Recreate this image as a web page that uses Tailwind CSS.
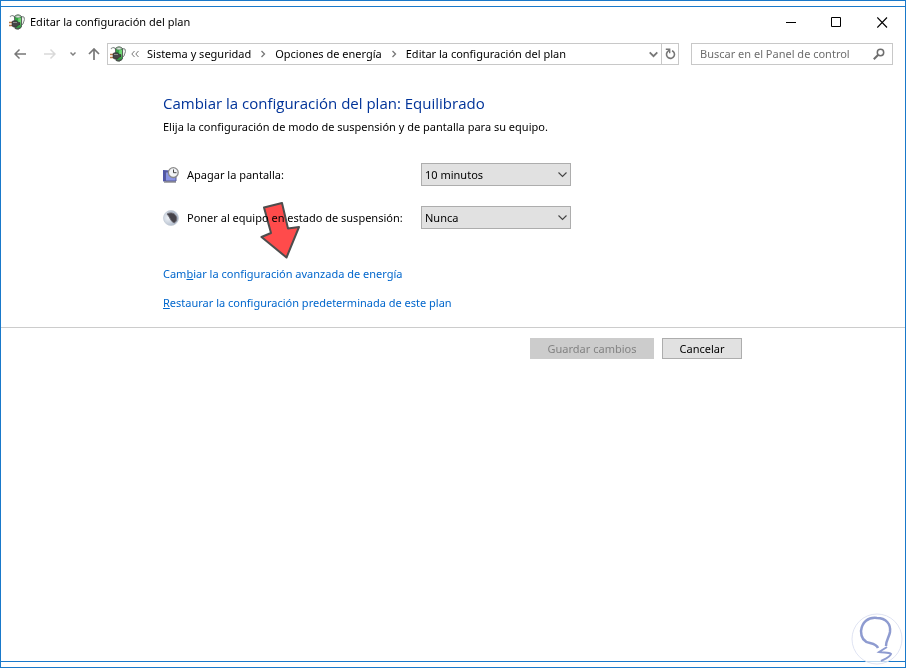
<!DOCTYPE html>
<html lang="es">
<head>
    <meta charset="UTF-8">
    <meta name="viewport" content="width=device-width, initial-scale=1.0">
    <title>Editar la configuración del plan</title>
    <script src="https://cdn.jsdelivr.net/npm/@tailwindcss/browser@4"></script>
</head>
<body class="bg-white text-black text-[11px] leading-4 font-['Noto_Sans','Open_Sans',sans-serif]">
    <!-- shared battery/plug icon -->
    <svg class="hidden">
        <symbol id="power" viewBox="0 0 16 16">
            <path d="M1 3C2.500 .8 5 1 6 4" fill="none" stroke="#8b9290" stroke-width="1.200"/>
            <path d="M12 2.500l3 .5.500 2.500-1.500 4.500-2 1.500" fill="#eef2ef" stroke="#7d8581" stroke-width="1"/>
            <path d="M5.500 2.500Q9-.8 12.500 2.500L12.500 13q-2.500 3.500-6.500 1.500z" fill="#35a345" stroke="#59635c" stroke-width="1"/>
            <path d="M6 2.500Q9 .3 12 2.500 9 5 6 2.500z" fill="#dfe8e0" stroke="#8b958e" stroke-width=".5"/>
            <path d="M9 4.500l3-.8v7l-2 1z" fill="#6fd672"/>
            <path d="M6 13.300q3 1.500 6-.5v1q-2.500 2.500-6 1z" fill="#4c544e"/>
            <path d="M0 8.500h3.500M0 11.500h3.500" stroke="#b87a4a" stroke-width="1.500"/>
            <path d="M3 7.500l1.500-.8h3l2 1.800h1.500v2.500H9.500l-2 2h-3L3 12z" fill="#454545" stroke="#2b2b2b" stroke-width=".5"/>
            <path d="M4 8.500h4" stroke="#8c8c8c"/>
        </symbol>
    </svg>

    <div class="min-h-screen flex flex-col border border-[#1979ca]">
        <div class="h-1.5 border-b border-[#1979ca]"></div>

        <!-- Title bar -->
        <header class="flex items-center h-[30px] pl-2">
            <svg class="size-4"><use href="#power"/></svg>
            <span class="ml-[5px]">Editar la configuración del plan</span>
            <div class="ml-auto flex">
                <button class="w-[46px] h-7 grid place-items-center" aria-label="Minimizar">
                    <svg class="size-[11px]" viewBox="0 0 11 11"><path d="M0 5.500h10" stroke="#000"/></svg>
                </button>
                <button class="w-[45px] h-7 grid place-items-center" aria-label="Maximizar">
                    <svg class="size-[11px]" viewBox="0 0 11 11"><path d="M.5.5h9v9h-9z" fill="none" stroke="#000"/></svg>
                </button>
                <button class="w-[46px] h-7 grid place-items-center" aria-label="Cerrar">
                    <svg class="size-[11px]" viewBox="0 0 11 11"><path d="M.3.500l9.700 10M10 .5L.3 10.500" stroke="#000" stroke-width="1.100"/></svg>
                </button>
            </div>
        </header>

        <!-- Navigation bar -->
        <nav class="flex items-center pt-1.5 pl-[13px] pr-3">
            <button aria-label="Atrás">
                <svg class="w-3 h-3" viewBox="0 0 12 12" fill="none" stroke="#777" stroke-width="1.500"><path d="M12 6H1M5.500 1.500L1 6l4.500 4.500"/></svg>
            </button>
            <button class="ml-[18px]" aria-label="Adelante">
                <svg class="w-3 h-3" viewBox="0 0 12 12" fill="none" stroke="#d9d9d9" stroke-width="1.500"><path d="M0 6h11M6.500 1.500L11 6l-4.500 4.500"/></svg>
            </button>
            <button class="ml-3.5" aria-label="Ubicaciones recientes">
                <svg class="w-1.5 h-1.5" viewBox="0 0 6 6" fill="none" stroke="#808080" stroke-width="1.500"><path d="M.5 1.500L3 4l2.500-2.500"/></svg>
            </button>
            <button class="ml-3" aria-label="Subir">
                <svg class="w-3 h-3" viewBox="0 0 12 12" fill="none" stroke="#777" stroke-width="1.700"><path d="M6 12V1M1 6l5-5 5 5"/></svg>
            </button>

            <div class="ml-[7px] flex-1 flex items-center h-[22px] border border-[#c8c8c8]">
                <svg class="ml-0.5 size-4"><use href="#power"/></svg>
                <svg class="ml-[5px] mr-px w-2 h-2" viewBox="0 0 8 8" fill="none" stroke="#777"><path d="M3.500 1L.8 4l2.700 3M7.500 1L4.800 4l2.700 3"/></svg>
                <a href="#" class="ml-[7px]">Sistema y seguridad</a>
                <svg class="mx-[9px] w-1.5 h-2" viewBox="0 0 6 8" fill="none" stroke="#777" stroke-width="1.300"><path d="M1.500 1l3 3-3 3"/></svg>
                <a href="#">Opciones de energía</a>
                <svg class="mx-[9px] w-1.5 h-2" viewBox="0 0 6 8" fill="none" stroke="#777" stroke-width="1.300"><path d="M1.500 1l3 3-3 3"/></svg>
                <a href="#">Editar la configuración del plan</a>
                <button class="ml-auto w-[15px] grid place-items-center" aria-label="Ubicaciones anteriores">
                    <svg class="w-[9px] h-[7px]" viewBox="0 0 9 7" fill="none" stroke="#777" stroke-width="1.800"><path d="M.7 1.300l3.800 3.900 3.800-3.900"/></svg>
                </button>
                <button class="w-[17px] h-full border-l border-[#c8c8c8] grid place-items-center" aria-label="Actualizar">
                    <svg class="w-[11px] h-3" viewBox="0 0 11 12" fill="none" stroke="#777" stroke-width="1.600"><path d="M7 2.700A4 4 0 1 1 2.300 4L4.300 2"/><path d="M.8 1.300h3.900v3.900" stroke-width="1.400"/></svg>
                </button>
            </div>

            <div class="ml-3 w-[202px] h-[22px] flex items-center border border-[#c8c8c8] pl-2 pr-[7px]">
                <input type="search" aria-label="Buscar" placeholder="Buscar en el Panel de control" class="flex-1 min-w-0 outline-none placeholder:text-[#6d6d6d]">
                <svg class="w-3 h-3" viewBox="0 0 12 12" fill="none" stroke="#6d6d6d"><circle cx="7.500" cy="4.500" r="3.200" stroke-width="1.500"/><path d="M5 7L.8 11.200" stroke-width="2"/></svg>
            </div>
        </nav>

        <!-- Plan settings -->
        <main class="flex-1">
            <form>
                <div class="pl-[162px] pt-7 pb-4">
                    <h1 class="text-[15px] leading-5 text-[#003399] font-['Open_Sans',sans-serif]">Cambiar la configuración del plan: Equilibrado</h1>
                    <p class="mt-1.5">Elija la configuración de modo de suspensión y de pantalla para su equipo.</p>

                    <div class="mt-7 flex items-center">
                        <svg class="size-4" viewBox="0 0 16 16">
                            <path d="M0 3l8 .5v10l-8 1z" fill="#5056a8"/>
                            <path d="M2.500 5l10.500-.5v9.500H2.500z" fill="#8a94e4" stroke="#5a5c96"/>
                            <path d="M1 15h12" stroke="#55555f"/>
                            <circle cx="10.300" cy="5.600" r="4.900" fill="#f2f4f6" stroke="#8a8a8a" stroke-width="1.300"/>
                            <path d="M10.500 2.500v3.200h3" fill="none" stroke="#444"/>
                        </svg>
                        <label for="screen" class="ml-2 w-[234px]">Apagar la pantalla:</label>
                        <div class="relative">
                            <select id="screen" class="appearance-none w-[150px] h-[23px] pl-[3px] bg-[#e1e1e1] border border-[#adadad]">
                                <option>10 minutos</option>
                            </select>
                            <svg class="absolute right-1 top-2 w-[9px] h-[7px] pointer-events-none" viewBox="0 0 9 7" fill="none" stroke="#444" stroke-width="1.100"><path d="M.5 1.500l4 4 4-4"/></svg>
                        </div>
                    </div>

                    <div class="relative mt-5 flex items-center">
                        <svg class="size-4" viewBox="0 0 16 16">
                            <defs>
                                <radialGradient id="moon" cx=".3" cy=".5" r=".7"><stop offset="0" stop-color="#eef2f7"/><stop offset="1" stop-color="#a4b0c2"/></radialGradient>
                            </defs>
                            <circle cx="8" cy="8" r="7.500" fill="url(#moon)" stroke="#c4ccd6" stroke-width=".8"/>
                            <path d="M4 4C8 1.500 13 3.500 13.700 8c0 2.500-.8 4-2.200 4.700C8 12.500 7 7 4 4z" fill="#45434a" stroke="#6c6a72"/>
                        </svg>
                        <label for="sleep" class="ml-2 w-[234px] whitespace-nowrap">Poner al equipo en estado de suspensión:</label>
                        <div class="relative">
                            <select id="sleep" class="appearance-none w-[150px] h-[23px] pl-[3px] bg-[#e1e1e1] border border-[#adadad]">
                                <option>Nunca</option>
                            </select>
                            <svg class="absolute right-1 top-2 w-[9px] h-[7px] pointer-events-none" viewBox="0 0 9 7" fill="none" stroke="#444" stroke-width="1.100"><path d="M.5 1.500l4 4 4-4"/></svg>
                        </div>
                        <!-- pointer arrow -->
                        <svg class="absolute left-24 -top-1.5 w-[42px] h-[60px] mix-blend-multiply pointer-events-none" viewBox="0 0 42 60">
                            <path d="M5 7.500L23 3 29 28.500l11-1.500L27.500 57.500 2.500 37l9.500-4z" fill="#ff4b4b" stroke="#4d4d4d" stroke-width="2" stroke-linejoin="round"/>
                        </svg>
                    </div>

                    <p class="mt-[37px]"><a href="#" class="text-[#0066cc]">Cam<u>b</u>iar la configuración avanzada de energía</a></p>
                    <p class="mt-[13px]"><a href="#" class="text-[#0066cc]"><u>R</u>estaurar la configuración predeterminada de este plan</a></p>
                </div>

                <div class="border-t border-[#cccccc] pt-2.5">
                    <div class="max-w-[741px] flex justify-end gap-2">
                        <button type="submit" disabled class="w-[124px] h-[21px] bg-[#cccccc] text-[#838383]">Guardar cambios</button>
                        <button type="button" class="w-20 h-[21px] bg-[#e1e1e1] border border-[#adadad] flex items-center justify-center">Cancelar</button>
                    </div>
                </div>
            </form>
        </main>

        <div class="h-1.5 border-t border-[#1979ca]"></div>
    </div>

    <!-- Bulb watermark -->
    <svg class="fixed right-[3px] bottom-[3px] w-[52px] h-[52px]" viewBox="0 0 52 52" fill="none">
        <circle cx="26" cy="26" r="25" fill="#fff" fill-opacity=".7" stroke="#dfe3f2"/>
        <path d="M27 35c-1-3-4-4-8-5-6-1-9-5-9-12C11 9 17 4 26 5c9 0 14 6 13 14-1 6-4 8-4 14" stroke="#8e9bd0" stroke-width="2.500"/>
        <path d="M36 34l-8 5c4 1 10 0 12 2-1 3-6 5-10 7" stroke="#8e9bd0" stroke-width="2"/>
    </svg>
</body>
</html>
